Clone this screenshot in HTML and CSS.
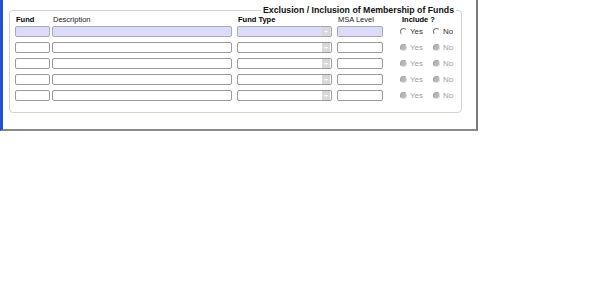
FILE: index.html
```html
<!DOCTYPE html>
<html>
  <head>
    <meta charset="utf-8">
    <link rel="stylesheet" href="styles.css">
  </head>
  <body>
    <div class="panel">
      <fieldset class="funds">
        <legend>Exclusion / Inclusion of Membership of Funds</legend>
        <div class="grid">
          <div class="hd bold">Fund</div>
          <div class="hd">Description</div>
          <div class="hd bold">Fund Type</div>
          <div class="hd">MSA Level</div>
          <div class="hd bold inc">Include ?</div>

          <div><input class="fund active"></div>
          <div><input class="desc active"></div>
          <div><div class="select active"><span class="arrow"></span></div></div>
          <div><input class="msa active"></div>
          <div class="radios">
            <label><span class="radio"></span>Yes</label>
            <label><span class="radio"></span>No</label>
          </div>

          <div><input class="fund"></div>
          <div><input class="desc"></div>
          <div><div class="select"><span class="arrow"></span></div></div>
          <div><input class="msa"></div>
          <div class="radios off">
            <label><span class="radio"></span>Yes</label>
            <label><span class="radio"></span>No</label>
          </div>

          <div><input class="fund"></div>
          <div><input class="desc"></div>
          <div><div class="select"><span class="arrow"></span></div></div>
          <div><input class="msa"></div>
          <div class="radios off">
            <label><span class="radio"></span>Yes</label>
            <label><span class="radio"></span>No</label>
          </div>

          <div><input class="fund"></div>
          <div><input class="desc"></div>
          <div><div class="select"><span class="arrow"></span></div></div>
          <div><input class="msa"></div>
          <div class="radios off">
            <label><span class="radio"></span>Yes</label>
            <label><span class="radio"></span>No</label>
          </div>

          <div><input class="fund"></div>
          <div><input class="desc"></div>
          <div><div class="select"><span class="arrow"></span></div></div>
          <div><input class="msa"></div>
          <div class="radios off">
            <label><span class="radio"></span>Yes</label>
            <label><span class="radio"></span>No</label>
          </div>
        </div>
      </fieldset>
    </div>
  </body>
</html>
```

FILE: styles.css
```css
body {
  margin: 0;
  font-family: "Liberation Sans", Arial, sans-serif;
  font-size: 7.5px;
  color: #000000;
  background-color: #FFFFFF;
}

.panel {
  width: 467px;
  height: 124px;
  padding: 5px 0 0 6px;
  border-left: solid 3px #2450d8;
  border-right: solid 2px #7a7a7a;
  border-bottom: solid 2px #8a8a8a;
}

.funds {
  width: 453px;
  height: 108px;
  min-width: 0;
  box-sizing: border-box;
  margin: 0;
  padding: 0 5px;
  border: solid 1px #d4d4cc;
  border-radius: 4px;
}

.funds legend {
  margin-left: auto;
  margin-right: 0;
  padding: 0 2px;
  font-weight: bold;
  font-size: 8.75px;
  line-height: 10px;
  color: #111111;
}

.grid {
  display: grid;
  grid-template-columns: 37px 185px 100px 60px minmax(0, 1fr);
  grid-template-rows: 11px;
  grid-auto-rows: 16px;
}

.hd {
  line-height: 9px;
  padding-left: 1px;
  color: #222222;
}

.bold {
  font-weight: bold;
  color: #000000;
}

.inc {
  padding-left: 5px;
}

.grid input,
.select {
  display: block;
  height: 11px;
  box-sizing: border-box;
  margin: 0;
  padding: 0;
  border: solid 1px #9a9a9a;
  border-radius: 2px;
  background-color: #FFFFFF;
}

.fund { width: 35px; }
.desc { width: 180px; }
.select { width: 95px; position: relative; }
.msa { width: 46px; }

.grid .active {
  background-color: #dcdcf8;
  border-color: #a8a8c0;
}

.arrow {
  position: absolute;
  right: 1px;
  top: 0;
  width: 8px;
  height: 9px;
  background-color: #d8d8d8;
}

.arrow::after {
  content: "";
  position: absolute;
  left: 2px;
  top: 4px;
  border-left: 2px solid transparent;
  border-right: 2px solid transparent;
  border-top: 2px solid #ffffff;
}

.radios {
  display: flex;
  align-items: center;
  height: 11px;
  padding-left: 3px;
  color: #333333;
  font-size: 8px;
}

.radios label {
  display: flex;
  align-items: center;
  width: 33px;
}

.radios label + label {
  width: auto;
}

.radio {
  display: inline-block;
  width: 5px;
  height: 5px;
  margin-right: 3px;
  border-radius: 50%;
  border-left: solid 1px #777777;
  border-top: solid 1px #777777;
  border-right: solid 1px transparent;
  border-bottom: solid 1px transparent;
}

.off {
  color: #a0a0a0;
}

.off .radio {
  background-color: #b8b8b8;
  border-color: #a0a0a0 #e0e0e0 #e0e0e0 #a0a0a0;
}
```
